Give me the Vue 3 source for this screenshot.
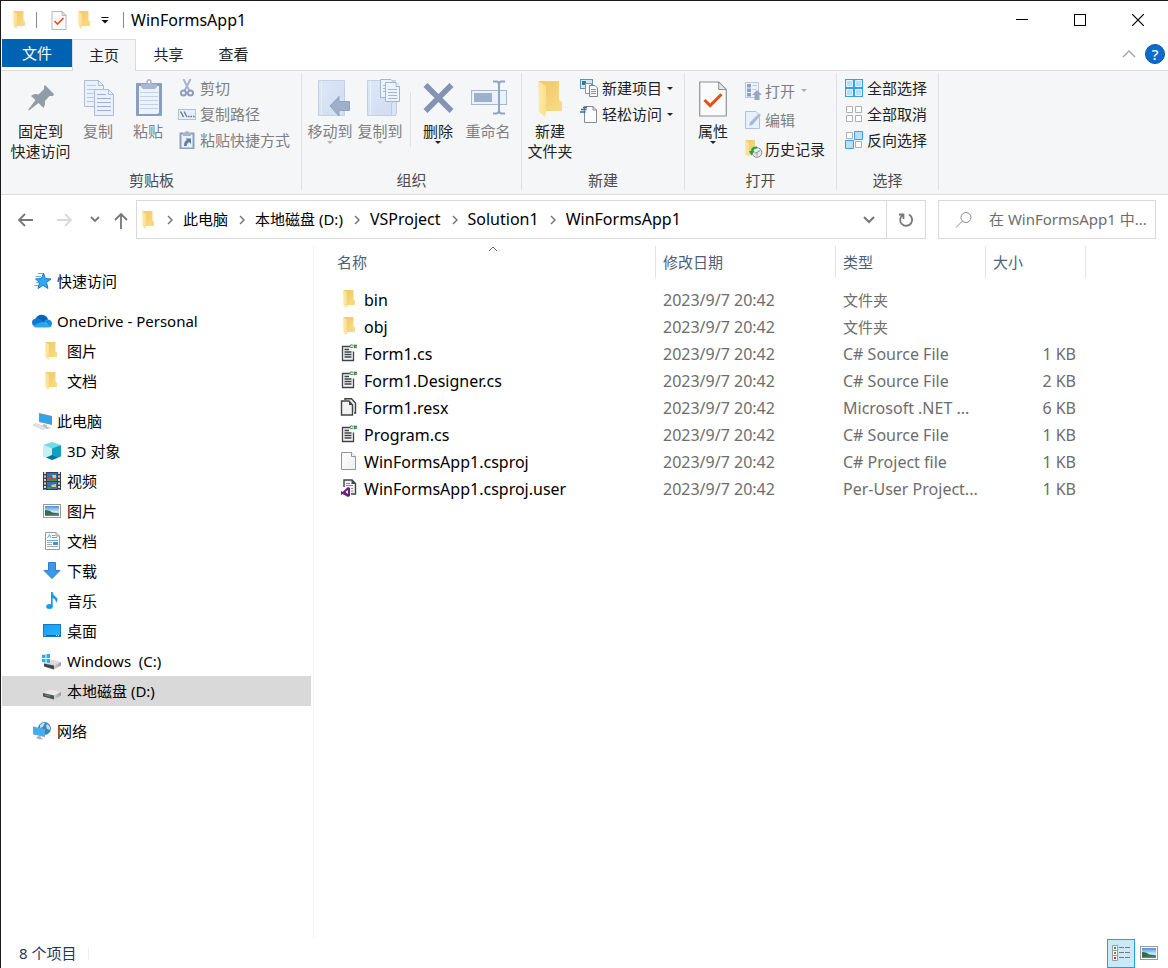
<script setup>
import { ref } from 'vue'

const tabs = ['主页', '共享', '查看']

const clipboardActions = [
  { icon: 'cut', label: '剪切' },
  { icon: 'copypath', label: '复制路径' },
  { icon: 'pastelink', label: '粘贴快捷方式' }
]
const newActions = [
  { icon: 'newitem', label: '新建项目' },
  { icon: 'ease', label: '轻松访问' }
]
const openActions = [
  { icon: 'open', label: '打开', arrow: true, disabled: true },
  { icon: 'edit', label: '编辑', disabled: true },
  { icon: 'history', label: '历史记录' }
]
const selectActions = [
  { icon: 'selall', label: '全部选择' },
  { icon: 'selnone', label: '全部取消' },
  { icon: 'selinv', label: '反向选择' }
]

const crumbs = [
  { label: '此电脑' },
  { label: '本地磁盘 (D:)' },
  { label: 'VSProject', latin: true },
  { label: 'Solution1', latin: true },
  { label: 'WinFormsApp1', latin: true }
]

const navGroups = [
  [{ icon: 'star', label: '快速访问' }],
  [
    { icon: 'cloud', label: 'OneDrive - Personal' },
    { icon: 'folder', label: '图片', child: true },
    { icon: 'folder', label: '文档', child: true }
  ],
  [
    { icon: 'pc', label: '此电脑' },
    { icon: 'cube', label: '3D 对象', child: true },
    { icon: 'video', label: '视频', child: true },
    { icon: 'picture', label: '图片', child: true },
    { icon: 'doc', label: '文档', child: true },
    { icon: 'download', label: '下载', child: true },
    { icon: 'music', label: '音乐', child: true },
    { icon: 'desktop', label: '桌面', child: true },
    { icon: 'windrive', label: 'Windows  (C:)', child: true },
    { icon: 'drive', label: '本地磁盘 (D:)', child: true, active: true }
  ],
  [{ icon: 'network', label: '网络' }]
]

const date = '2023/9/7 20:42'
const files = [
  { icon: 'folder', name: 'bin', type: '文件夹', size: '' },
  { icon: 'folder', name: 'obj', type: '文件夹', size: '' },
  { icon: 'cs', name: 'Form1.cs', type: 'C# Source File', size: '1 KB' },
  { icon: 'cs', name: 'Form1.Designer.cs', type: 'C# Source File', size: '2 KB' },
  { icon: 'resx', name: 'Form1.resx', type: 'Microsoft .NET ...', size: '6 KB' },
  { icon: 'cs', name: 'Program.cs', type: 'C# Source File', size: '1 KB' },
  { icon: 'blank', name: 'WinFormsApp1.csproj', type: 'C# Project file', size: '1 KB' },
  { icon: 'vs', name: 'WinFormsApp1.csproj.user', type: 'Per-User Project...', size: '1 KB' }
]

const query = ref('')
</script>

<template>
  <div class="window">
    <svg class="defs" width="0" height="0" aria-hidden="true">
      <defs>
        <linearGradient id="gBack" x1="0" x2="1" y1="0" y2="1">
          <stop offset="0" stop-color="#f0c765" /><stop offset="1" stop-color="#fadc87" />
        </linearGradient>
        <linearGradient id="gFlap" x1="0" x2="1"><stop offset="0" stop-color="#fdeaae" /><stop offset="1" stop-color="#fcdf8c" /></linearGradient>
        <linearGradient id="gPage" x1="0" x2="1" y1="0" y2="1"><stop offset="0" stop-color="#fff" /><stop offset="1" stop-color="#eceff2" /></linearGradient>
        <linearGradient id="gBook" x1="0" x2="1" y1="0" y2="1"><stop offset="0" stop-color="#dde8f6" /><stop offset="1" stop-color="#cfdcf0" /></linearGradient>
        <linearGradient id="gBlue" x1="0" x2="1" y1="0" y2="1"><stop offset="0" stop-color="#1e9bf5" /><stop offset="1" stop-color="#28b4ff" /></linearGradient>
        <linearGradient id="gDrive" x1="0" x2="1"><stop offset="0" stop-color="#d4d4d4" /><stop offset="1" stop-color="#989898" /></linearGradient>
        <linearGradient id="gSky" x1="0" x2="0" y1="0" y2="1"><stop offset="0" stop-color="#4a90dd" /><stop offset="0.6" stop-color="#d8ecf8" /><stop offset="1" stop-color="#3d7396" /></linearGradient>
      </defs>
      <symbol id="i-folder" viewBox="-4 0 32 36">
        <path d="M1 0H21V19L24 21V30H6Z" fill="url(#gBack)" />
        <path d="M0 0L8 5V31L7 36L1 31Z" fill="url(#gFlap)" />
      </symbol>
      <symbol id="i-check" viewBox="0 0 30 38">
        <path d="M1 1H21L29 9V37H1Z" fill="#fafbfc" stroke="#8a8d90" stroke-width="1.200" />
        <path d="M21 1V9H29Z" fill="#e4e6e8" stroke="#8a8d90" />
        <path d="M6 20L12 26L24 14" fill="none" stroke="#e8500f" stroke-width="3.200" />
      </symbol>
      <symbol id="i-pin" viewBox="0 0 40 40">
        <path d="M24 6L33 15L32 17L28.5 17L24 22Q24.500 26 22.500 29L17.500 24L8 31.500L7 31L14.500 21L10 17Q13 14 17.500 15.500L23 10V7.500Z" fill="#929ca6" />
      </symbol>
      <symbol id="i-copy" viewBox="0 0 40 40">
        <g fill="#e9f1fb" stroke="#abbbd8">
          <path d="M6.500 1.500H20.500L25.500 6.500V27.500H6.500Z" /><path d="M20.500 1.500V6.500H25.500Z" />
          <path d="M9 6.500H18M9 10.500H23M9 14.500H23M9 18.500H23M9 22.500H23" stroke="#bac8df" />
          <path d="M16.500 10.500H30.500L35.500 15.500V36.500H16.500Z" /><path d="M30.500 10.500V15.500H35.500Z" />
          <path d="M19 15.500H28M19 19.500H33M19 23.500H33M19 27.500H33M19 31.500H33" stroke="#9fb1d1" />
        </g>
      </symbol>
      <symbol id="i-paste" viewBox="0 0 40 40">
        <rect x="8" y="4" width="26" height="33" rx="1" fill="#8c9ebd" />
        <path d="M11 7H31V34L29 35H11Z" fill="#eaf2fc" />
        <path d="M12 13.500H30M12 17.500H30M12 21.500H30M12 25.500H30M12 29.500H30" stroke="#c5d2e6" />
        <path d="M13 5H18Q18 0 21 0T24 5H29V8L27 10H15L13 8Z" fill="#a9b8d1" />
        <rect x="20" y="2" width="2" height="2" fill="#fff" />
      </symbol>
      <symbol id="i-moveto" viewBox="0 0 40 40">
        <path d="M8.500 1.500H34.500V36.500H8.500Z" fill="url(#gBook)" stroke="#c3d1e8" />
        <path d="M11.500 2V36M31 20V36" stroke="#e4edf8" />
        <path d="M20 27L29 17.500V22.500H39.500V31.500H29V37Z" fill="#9eafcb" stroke="#90a2c1" />
      </symbol>
      <symbol id="i-copyto" viewBox="0 0 40 40">
        <path d="M7.500 1.500H35.500V36.500H7.500Z" fill="url(#gBook)" stroke="#c3d1e8" />
        <path d="M10.500 2V36" stroke="#e9f0fa" /><path d="M31.500 36.500V24L36.500 21V34L35.500 36.500Z" fill="#d9e5f4" stroke="#bdcce5" />
        <g fill="#edf3fc" stroke="#a2b4d2"><path d="M20.500 .5H31L34.500 4V18.500H20.500Z" /><path d="M23 6.500H30M23 9.500H30M23 12.500H30" />
          <path d="M25.500 3.500H36L39.500 7.500V22.500H25.500Z" /><path d="M36 3.500V7.500H39.500M28 10.500H37M28 13.500H37M28 16.500H37M28 19.500H37" /></g>
      </symbol>
      <symbol id="i-delete" viewBox="0 0 40 40">
        <path d="M7.500 6L33.500 32M33.500 6L7.500 32" stroke="#8493b3" stroke-width="5.600" />
      </symbol>
      <symbol id="i-rename" viewBox="0 0 40 40">
        <rect x="3.500" y="11.500" width="35" height="14" fill="#e9f1fb" stroke="#a7b8d4" />
        <rect x="6" y="14" width="18" height="9" fill="#9fb0cc" />
        <path d="M25 2.500H29Q31 3 31 6V31Q31 34.500 28 34.500H25M37 2.500H33Q31 3 31 6M31 31Q31 34.500 34 34.500H37" fill="none" stroke="#91a4c3" stroke-width="2" />
      </symbol>
      <symbol id="i-cut" viewBox="0 0 18 18">
        <path d="M5.500 0L11.500 12M12.500 0L6.500 12" stroke="#a5b4cf" stroke-width="2" />
        <circle cx="5.500" cy="14" r="2.500" fill="none" stroke="#8b9dbe" stroke-width="2" /><circle cx="12.500" cy="14" r="2.500" fill="none" stroke="#8b9dbe" stroke-width="2" />
      </symbol>
      <symbol id="i-copypath" viewBox="0 0 18 18">
        <rect x=".5" y="4.500" width="17" height="10" fill="#e6eefa" stroke="#b3c2dc" />
        <path d="M2.500 6.500L5.500 12M6 6.500L9 12M10 11.500H11.500M12.500 11.500H14M15 11.500H16.500" stroke="#61738f" stroke-width="1.300" />
      </symbol>
      <symbol id="i-pastelink" viewBox="0 0 18 18">
        <rect x="2.500" y="2.500" width="13" height="15" fill="#e9f1fb" stroke="#8ea0bf" stroke-width="2" />
        <path d="M5 2H7Q7 0 9 0T11 2H13V5H5Z" fill="#a6b5cf" />
        <path d="M6 15Q6 10 9 9L7.500 7.500H13V13L11 11Q9 12 8.500 15Z" fill="#677b9f" />
      </symbol>
      <symbol id="i-newitem" viewBox="0 0 18 18">
        <rect x=".5" y=".5" width="12" height="9" fill="#cfeafa" stroke="#5a93b5" /><rect x="2" y="2" width="4" height="4" fill="#33759c" />
        <path d="M5.500 4.500H11.500V14.500H5.500Z" fill="#fff" stroke="#8b959c" />
        <path d="M9.500 6.500H15L17.500 9V17.500H9.500Z" fill="#f6faff" stroke="#7d858b" /><path d="M11 10.500H16M11 12.500H16M11 14.500H16" stroke="#4fa3e0" />
      </symbol>
      <symbol id="i-ease" viewBox="0 0 18 18">
        <path d="M4.500 1.500H13L16.500 5V17.500H4.500Z" fill="#fbfcfd" stroke="#868b90" /><path d="M13 1.500V5H16.500" fill="none" stroke="#868b90" />
        <path d="M0 7H5.500M1 4.500H6.500M3 2.500H7" stroke="#1b76bf" stroke-width="1.500" />
      </symbol>
      <symbol id="i-open" viewBox="0 0 18 18">
        <rect x=".5" y=".5" width="13" height="15" fill="#edf3fb" stroke="#b9c7df" />
        <path d="M2 2H6V5.500H2ZM2 6.500H6V10H2ZM2 11H6V14.500H2Z" fill="#8d9fbe" /><path d="M7.500 3.500H12M7.500 7.500H11" stroke="#b7c4db" />
        <path d="M12 8L17 13H14.500V18H9.500V13H7Z" fill="#96a7c5" />
      </symbol>
      <symbol id="i-edit" viewBox="0 0 18 18">
        <path d="M.5 .5H11L14.500 4V17.500H.5Z" fill="#e8f0fb" stroke="#b2c1db" />
        <path d="M4 15L5 11L14 2.500L16 4L7.500 14Z" fill="#a7b7d3" stroke="#dce6f5" stroke-width=".6" />
      </symbol>
      <symbol id="i-history" viewBox="0 0 18 18">
        <path d="M1 0H10V15H3Z" fill="url(#gBack)" /><path d="M0 0L4 3V17L0 15Z" fill="url(#gFlap)" />
        <circle cx="12" cy="12.500" r="4.800" fill="#e9ebec" stroke="#868b8e" /><path d="M12 12.500L15 10.500M9.500 13L12 12.500V15.500" fill="none" stroke="#8b9195" />
        <path d="M12 6.500Q6 6 6 11H4L6.500 15.500L9.500 11H8.500Q8.500 8.500 12 8.500Z" fill="#25a73b" />
      </symbol>
      <symbol id="i-selall" viewBox="0 0 18 18">
        <rect width="18" height="18" fill="#3d9de7" /><path d="M1.500 1.500H7.500V7.500H1.500ZM10.500 1.500H16.500V7.500H10.500ZM1.500 10.500H7.500V16.500H1.500ZM10.500 10.500H16.500V16.500H10.500Z" fill="#b8e0fb" stroke="#e4f4ff" />
      </symbol>
      <symbol id="i-selnone" viewBox="0 0 18 18">
        <path d="M1.500 1.500H7.500V7.500H1.500ZM10.500 1.500H16.500V7.500H10.500ZM1.500 10.500H7.500V16.500H1.500ZM10.500 10.500H16.500V16.500H10.500Z" fill="#fff" stroke="#afafaf" />
      </symbol>
      <symbol id="i-selinv" viewBox="0 0 18 18">
        <path d="M1.500 1.500H7.500V7.500H1.500ZM10.500 10.500H16.500V16.500H10.500Z" fill="#fff" stroke="#afafaf" />
        <path d="M9.500 .5H17.500V8.500H9.500ZM.5 9.500H8.500V17.500H.5Z" fill="#b8e0fb" stroke="#3d9de7" />
      </symbol>

      <symbol id="i-star" viewBox="0 0 20 20">
        <path d="M11.500 2L13.300 7.500L19 8L14.500 11.500L16 17.500L11 14.300L6 17.500L7.500 11.500L3.500 8L9.500 7.500Z" fill="#31a6f1" stroke="#177cc8" />
        <path d="M6 2.500H11M3.500 5.500H9M4 11.500H7M2.500 14.500H6" stroke="#5db3e9" />
      </symbol>
      <symbol id="i-cloud" viewBox="0 0 20 20">
        <path d="M3.500 8Q6 3 11 4Q15 4.500 16 8.500L7 15Z" fill="#0364b8" /><path d="M12 10Q13 8 16 8.500Q20 9 20 12.500Q20 15 18 16.200Z" fill="#1490df" />
        <path d="M4 7.500Q7 7 9 9L14 12L7 14L2 15Q0 14 0 11.500Q0 8 4 7.500Z" fill="#0f78d4" /><path d="M1.500 15Q7 11 11.500 11L19 15.500Q18 16.500 16 16.500H4.500Q2.500 16.500 1.500 15Z" fill="#28a8ea" />
      </symbol>
      <symbol id="i-pc" viewBox="0 0 20 20">
        <path d="M7 2L20 5V14L7 11Z" fill="#6d92aa" /><path d="M8 3.500L19 6V12.500L8 10Z" fill="#2da5ef" />
        <path d="M12 13L15 14V16L19 17L15 18L9 16Z" fill="#b9c1c6" /><path d="M1 14L4 12.500L14 16.500L11 18.500Z" fill="#e1e5e8" stroke="#bfc6ca" stroke-width=".6" />
      </symbol>
      <symbol id="i-cube" viewBox="0 0 20 20">
        <path d="M10 1L19 4L10 8L1 4Z" fill="#74dbe5" /><path d="M1 4L10 7.500V19L1 15.500Z" fill="#c6eef3" /><path d="M19 4L10 7.500V19L19 15.500Z" fill="#139fc4" /><path d="M4 16.500L10 14L16 16.500L10 19Z" fill="#087491" />
      </symbol>
      <symbol id="i-video" viewBox="0 0 20 20">
        <rect x="1" y="1" width="18" height="18" fill="#3b3f43" /><path d="M5 2H15V10H5ZM5 11H15V18H5Z" fill="#386ec0" />
        <path d="M10 4H14V7H11ZM9 14L14 13V16H10Z" fill="#ead13f" /><path d="M5 7H9V9H5ZM11 7H14V10H11Z" fill="#d7462d" /><path d="M5 9H15V10H5ZM6 16H9V18H6Z" fill="#479447" />
        <path d="M3 1V19M17 1V19" stroke="#fff" stroke-width="1.600" stroke-dasharray="2 1.500" />
      </symbol>
      <symbol id="i-picture" viewBox="0 0 20 20">
        <rect x="1.500" y="3.500" width="17" height="13" fill="#fff" stroke="#969a9d" /><path d="M3 5H17V15H3Z" fill="url(#gSky)" />
        <path d="M3 9Q8 9 10 11.500Q14 12 17 12.500V13.500L3 14Z" fill="#39694b" />
      </symbol>
      <symbol id="i-doc" viewBox="0 0 20 20">
        <path d="M3.500 1.500H14L17.500 5V18.500H3.500Z" fill="#fff" stroke="#979a9d" /><path d="M14 1.500V5H17.500" fill="none" stroke="#979a9d" />
        <path d="M5.500 7L7.500 3.500L9 7M10 4.500H13M10 6.500H15M5 9.500H16" fill="none" stroke="#5ba7d6" /><path d="M5 11.500H10M5 13.500H10M5 15.500H16" stroke="#a4a7aa" /><rect x="11" y="11" width="5" height="3" fill="#4a8fbd" />
      </symbol>
      <symbol id="i-download" viewBox="0 0 20 20"><path d="M6.500 1.500H13.500V9.500H18L10 17.500L2 9.500H6.500Z" fill="#3a9ae8" stroke="#2b7fcb" /></symbol>
      <symbol id="i-music" viewBox="0 0 20 20">
        <path d="M9 1H10.500Q11 4 14 6T14 12Q14 8 10.700 7V15H9Z" fill="#139cf3" /><ellipse cx="7.500" cy="15.500" rx="3.300" ry="2.500" fill="#139cf3" />
      </symbol>
      <symbol id="i-desktop" viewBox="0 0 20 20">
        <rect x="1.500" y="3.500" width="17" height="12" fill="url(#gBlue)" stroke="#1479c7" /><path d="M2 14.500H18" stroke="#0a5b9f" /><path d="M2.500 14.500H4M14 14.500H17.500" stroke="#fff" stroke-dasharray="1 1" />
      </symbol>
      <symbol id="i-drive" viewBox="0 0 20 20">
        <path d="M1 12L9 8.500L19 11L12 14.500Z" fill="#eaeaea" /><path d="M12 14.500L19 11V14.500L12 18.500Z" fill="url(#gDrive)" /><path d="M1 12L12 14.500V18.500L1 15.500Z" fill="#505252" /><path d="M3 14L8 15.200" stroke="#719969" />
      </symbol>
      <symbol id="i-windrive" viewBox="0 0 20 20">
        <path d="M1 13L9 8.500L19 11L12 14.500Z" fill="#dcdcdc" /><path d="M12 14.500L19 11V14.500L12 18.500Z" fill="url(#gDrive)" /><path d="M2 12.500L12 14.500V18.500L2 15.500Z" fill="#454747" />
        <path d="M0 4L3.500 3.500V7H0ZM4.500 3.300L8 2.800V7H4.500ZM0 8H3.500V11.500L0 11ZM4.500 8H8V12L4.500 11.600Z" fill="#16b3ee" />
      </symbol>
      <symbol id="i-network" viewBox="0 0 20 20">
        <circle cx="12.500" cy="7.500" r="6.500" fill="#3686b8" /><path d="M8 4Q11 1 13 2L11 6L8 7ZM15 3Q19 5 18 9L15 8L14 5Z" fill="#b9def0" />
        <path d="M1 5.500L13 8V16L1 13.500Z" fill="#6aa3c8" /><path d="M2 6.800L12 9V14.700L2 12.500Z" fill="#3bb0f8" /><path d="M6 15L9 15.500V17L12 18L8 18.500L4 17Z" fill="#a9b2b8" />
      </symbol>

      <symbol id="i-cs" viewBox="0 0 18 18">
        <path d="M10 2.500H2.500V16.500H13.500V7.500" fill="#f3f4f5" stroke="#414447" stroke-width="1.300" /><path d="M4.500 5.500H9M4.500 8H11.500M4.500 10.500H11.500M4.500 13H11.500" stroke="#414447" stroke-width="1.300" />
        <path d="M13 1.200Q10 0 10 2.200Q10 4.500 13 3.200M13.500 1.500H17M13.500 3.200H17M14.500 .5V4.200M16 .5V4.200" fill="none" stroke="#368a3b" stroke-width="1" />
      </symbol>
      <symbol id="i-resx" viewBox="0 0 18 18">
        <path d="M5 2V.8H11.500L15.500 5V15H14" fill="#eee" stroke="#414447" stroke-width="1.400" /><path d="M1.500 3H9L12.500 7V17H1.500Z" fill="#f2f2f2" stroke="#414447" stroke-width="1.400" /><path d="M9 3V7H13Z" fill="#414447" />
      </symbol>
      <symbol id="i-blank" viewBox="0 0 18 18"><path d="M1.500 .5H11.500L15.500 4.500V17.500H1.500Z" fill="url(#gPage)" stroke="#929598" /><path d="M11.500 .5V4.500H15.500" fill="#fff" stroke="#929598" /></symbol>
      <symbol id="i-vs" viewBox="0 0 18 18">
        <path d="M4 8V1H12L15.500 4.500V15H11" fill="#f1f1f1" stroke="#414447" stroke-width="1.400" /><path d="M11.500 1V5H15.500Z" fill="#414447" /><path d="M6 4.500H10M6 6.500H13M11 9.500H13M11 12H13" stroke="#8a8d90" />
        <path d="M8 8L2.500 13L1 11.700V16.300L2.500 15L8 18L10 17V9Z" fill="#68217a" /><path d="M8 11V15L5.500 13Z" fill="#fff" />
      </symbol>
      <symbol id="i-details" viewBox="0 0 20 20">
        <path d="M1.500 2.500H6.500V7.500H1.500ZM1.500 7.500H6.500V12.500H1.500ZM1.500 12.500H6.500V17.500H1.500Z" fill="#fff" stroke="#999" />
        <path d="M3 4H5V6H3Z" fill="#3977a8" /><path d="M3 9H5V11H3Z" fill="#74932f" /><path d="M3 14H5V16H3Z" fill="#c62b20" />
        <path d="M8 4.500H13M14 4.500H19M8 9.500H13M14 9.500H19M8 14.500H13M14 14.500H19" stroke="#777" />
      </symbol>
    </svg>

    <header class="titlebar">
      <svg width="16" height="18"><use href="#i-folder" /></svg>
      <span class="t-sep"></span>
      <button class="t-btn" aria-label="属性"><svg width="16" height="19"><use href="#i-check" /></svg></button>
      <button class="t-btn" aria-label="新建文件夹"><svg width="16" height="18"><use href="#i-folder" /></svg></button>
      <button class="t-more" aria-label="自定义快速访问工具栏"><svg width="8" height="8" viewBox="0 0 8 8"><path d="M.5 1.500H7.500" stroke="#111" /><path d="M.5 4H7.500L4 7.500Z" fill="#111" /></svg></button>
      <span class="t-sep"></span>
      <h1>WinFormsApp1</h1>
      <div class="controls">
        <button aria-label="最小化"><svg width="12" height="12"><path d="M0 5.500H12" stroke="#000" /></svg></button>
        <button aria-label="最大化"><svg width="12" height="12"><rect x=".5" y=".5" width="11" height="11" fill="none" stroke="#000" /></svg></button>
        <button aria-label="关闭"><svg width="12" height="12"><path d="M0 0L12 12M12 0L0 12" stroke="#000" stroke-width="1.200" /></svg></button>
      </div>
    </header>

    <nav class="tabs">
      <button class="file-tab">文件</button>
      <button v-for="(t, i) in tabs" :key="t" class="tab" :class="{ current: i === 0 }">{{ t }}</button>
      <button class="collapse" aria-label="折叠功能区"><svg width="14" height="8" viewBox="0 0 14 8"><path d="M1 7L7 1L13 7" fill="none" stroke="#a3a3a3" stroke-width="1.400" /></svg></button>
      <button class="help" aria-label="帮助">?</button>
    </nav>

    <section class="ribbon">
      <div class="group g-clip">
        <div class="group-body">
          <button class="big pin"><svg width="40" height="40"><use href="#i-pin" /></svg><span>固定到<br />快速访问</span></button>
          <button class="big off"><svg width="40" height="40"><use href="#i-copy" /></svg><span>复制</span></button>
          <button class="big off"><svg width="40" height="40"><use href="#i-paste" /></svg><span>粘贴</span></button>
          <div class="smalls">
            <button v-for="a in clipboardActions" :key="a.label" class="small off"><svg width="18" height="18"><use :href="'#i-' + a.icon" /></svg>{{ a.label }}</button>
          </div>
        </div>
        <h2>剪贴板</h2>
      </div>
      <div class="group g-org">
        <div class="group-body">
          <button class="big off"><svg width="40" height="40"><use href="#i-moveto" /></svg><span>移动到</span><i class="arrow"></i></button>
          <button class="big off"><svg width="40" height="40"><use href="#i-copyto" /></svg><span>复制到</span><i class="arrow"></i></button>
          <span class="divider"></span>
          <button class="big"><svg width="40" height="40"><use href="#i-delete" /></svg><span>删除</span><i class="arrow"></i></button>
          <button class="big off"><svg width="40" height="40"><use href="#i-rename" /></svg><span>重命名</span></button>
        </div>
        <h2>组织</h2>
      </div>
      <div class="group g-new">
        <div class="group-body">
          <button class="big"><svg class="inset" width="32" height="40"><use href="#i-folder" /></svg><span>新建<br />文件夹</span></button>
          <div class="smalls">
            <button v-for="a in newActions" :key="a.label" class="small"><svg width="18" height="18"><use :href="'#i-' + a.icon" /></svg>{{ a.label }}<i class="arrow"></i></button>
          </div>
        </div>
        <h2>新建</h2>
      </div>
      <div class="group g-open">
        <div class="group-body">
          <button class="big"><svg class="inset" width="40" height="40"><use href="#i-check" /></svg><span>属性</span><i class="arrow"></i></button>
          <div class="smalls">
            <button v-for="a in openActions" :key="a.label" class="small" :class="{ off: a.disabled }"><svg width="18" height="18"><use :href="'#i-' + a.icon" /></svg>{{ a.label }}<i v-if="a.arrow" class="arrow"></i></button>
          </div>
        </div>
        <h2>打开</h2>
      </div>
      <div class="group g-select">
        <div class="group-body">
          <div class="smalls">
            <button v-for="a in selectActions" :key="a.label" class="small"><svg width="18" height="18"><use :href="'#i-' + a.icon" /></svg>{{ a.label }}</button>
          </div>
        </div>
        <h2>选择</h2>
      </div>
    </section>

    <div class="location">
      <div class="history">
        <button aria-label="后退"><svg width="16" height="14" viewBox="0 0 16 14"><path d="M7 1L1 7L7 13M1 7H15" fill="none" stroke="#777" stroke-width="1.800" /></svg></button>
        <button aria-label="前进"><svg width="16" height="14" viewBox="0 0 16 14"><path d="M9 1L15 7L9 13M1 7H15" fill="none" stroke="#d9d9d9" stroke-width="1.800" /></svg></button>
        <button class="recent" aria-label="最近浏览的位置"><svg width="10" height="7" viewBox="0 0 10 7"><path d="M1 1L5 5L9 1" fill="none" stroke="#777" stroke-width="1.800" /></svg></button>
        <button class="up" aria-label="向上"><svg width="14" height="16" viewBox="0 0 14 16"><path d="M1 7L7 1L13 7M7 1V16" fill="none" stroke="#777" stroke-width="1.800" /></svg></button>
      </div>
      <div class="address">
        <svg width="16" height="18"><use href="#i-folder" /></svg>
        <template v-for="c in crumbs" :key="c.label">
          <svg class="chev" width="6" height="10" viewBox="0 0 6 10"><path d="M1 1L5 5L1 9" fill="none" stroke="#777" stroke-width="1.500" /></svg>
          <a href="#" class="crumb" :class="{ latin: c.latin }">{{ c.label }}</a>
        </template>
        <button class="drop" aria-label="以前的位置"><svg width="12" height="8" viewBox="0 0 12 8"><path d="M1 1L6 6L11 1" fill="none" stroke="#777" stroke-width="2" /></svg></button>
        <button class="refresh" aria-label="刷新"><svg width="16" height="16" viewBox="0 0 16 16"><path d="M11 2.500A6 6 0 1 1 4.500 3M1 2.500H5.500V7" fill="none" stroke="#777" stroke-width="1.800" /></svg></button>
      </div>
      <label class="search">
        <svg width="18" height="18" viewBox="0 0 18 18"><circle cx="11" cy="6.500" r="5" fill="none" stroke="#888" /><path d="M7.500 10L1 16.500" stroke="#888" /></svg>
        <input v-model="query" type="text" aria-label="搜索" placeholder="在 WinFormsApp1 中..." />
      </label>
    </div>

    <main class="content">
      <nav class="tree">
        <ul v-for="(g, i) in navGroups" :key="i">
          <li v-for="n in g" :key="n.label">
            <a href="#" :class="{ child: n.child, active: n.active }"><svg width="20" height="20" :class="{ 'tree-folder': n.icon === 'folder' }"><use :href="'#i-' + n.icon" /></svg><span>{{ n.label }}</span></a>
          </li>
        </ul>
      </nav>
      <section class="list">
        <table>
          <colgroup><col class="c-name" /><col class="c-date" /><col class="c-type" /><col class="c-size" /></colgroup>
          <thead>
            <tr>
              <th><button>名称<svg class="sort" width="10" height="6" viewBox="0 0 10 6"><path d="M1 5L5 1L9 5" fill="none" stroke="#666" /></svg></button></th>
              <th><button>修改日期</button></th>
              <th><button>类型</button></th>
              <th><button>大小</button></th>
            </tr>
          </thead>
          <tbody>
            <tr v-for="f in files" :key="f.name">
              <td class="name"><div><svg width="18" height="18"><use :href="'#i-' + f.icon" /></svg>{{ f.name }}</div></td>
              <td>{{ date }}</td>
              <td :class="{ cjk: f.icon === 'folder' }">{{ f.type }}</td>
              <td class="size">{{ f.size }}</td>
            </tr>
          </tbody>
        </table>
      </section>
    </main>

    <footer class="status">
      <span class="count">8 个项目</span>
      <span class="status-sep"></span>
      <button class="view on" aria-label="详细信息"><svg width="20" height="20"><use href="#i-details" /></svg></button>
      <button class="view" aria-label="大图标"><svg width="20" height="20"><use href="#i-picture" /></svg></button>
    </footer>
  </div>
</template>

<style>
body { background: #fff; }
</style>

<style scoped>
* { box-sizing: border-box; }
.window {
  display: flex;
  flex-direction: column;
  min-height: 100vh;
  border-top: 1px solid #1c1a1d;
  border-left: 1px solid #1c1a1d;
  background: #fff;
  color: #000;
  font: 15px/20px "Noto Sans", "Noto Sans CJK SC", sans-serif;
}
.defs { position: absolute; }
svg { flex: none; }
button { font: inherit; color: inherit; background: none; border: 0; padding: 0; margin: 0; }
a { color: inherit; text-decoration: none; }
h1, h2, ul { margin: 0; padding: 0; font: inherit; list-style: none; }

.titlebar { display: flex; align-items: center; height: 38px; padding-left: 10px; }
.t-sep { width: 1px; height: 16px; background: #888; margin: 0 7px 0 9px; }
.t-btn { display: flex; justify-content: center; width: 25px; margin-left: 2px; }
.t-btn + .t-btn { margin-left: 0; }
.t-more { display: flex; justify-content: center; width: 18px; }
.titlebar h1 { font-size: 16px; }
.controls { display: flex; align-self: stretch; margin-left: auto; padding-right: 1px; }
.controls button { width: 58px; display: flex; align-items: center; justify-content: center; }

.tabs { display: flex; height: 32px; padding-left: 1px; border-bottom: 1px solid #dadbdc; }
.file-tab { width: 70px; height: 28px; background: #0063b1; color: #fff; }
.tab { width: 65px; height: 30px; color: #222; }
.tab.current { width: 64px; height: 32px; padding-bottom: 2px; background: #f5f6f7; border: 1px solid #dadbdc; border-bottom: 0; }
.collapse { margin-left: auto; display: flex; align-items: center; padding: 0 9px 2px; }
.help { width: 20px; height: 20px; margin: 5px 3px 0 0; border: 1px solid #0a56a5; border-radius: 50%; background: #0a6cce; color: #fff; line-height: 18px; font-weight: 500; }

.ribbon { display: flex; height: 124px; padding-left: 1px; background: #f5f6f7; border-bottom: 1px solid #dadbdc; color: #222; }
.group { display: flex; flex-direction: column; margin: 2px 0 4px; border-right: 1px solid #dfe1e3; }
.group h2 { text-align: center; color: #4b4b4b; line-height: 20px; }
.group-body { display: flex; height: 98px; }
.g-clip { width: 300px; }
.g-org { width: 220px; }
.g-new { width: 163px; }
.g-open { width: 152px; }
.g-select { width: 102px; }
.g-org .group-body, .g-new .group-body, .g-open .group-body { padding-left: 3px; }
.g-select .group-body { padding-left: 8px; }
.big { display: flex; flex-direction: column; align-items: center; width: 50px; padding-top: 6px; line-height: 20px; white-space: nowrap; }
.big > svg { margin-bottom: 2px; height: 40px; }
.big.pin { width: 71px; padding-left: 6px; }
.big span { display: block; text-align: center; }
.inset { padding: 2px 0; }
.off { color: #7d7f82; }
.arrow { width: 0; height: 0; border: 3px solid transparent; border-top-color: #222; border-bottom: 0; }
.off .arrow { border-top-color: #b0b0b0; }
.divider { width: 1px; height: 55px; background: #dfe1e3; margin: 19px 2px 0 5px; }
.smalls { display: flex; flex-direction: column; padding: 2px 0 0 5px; }
.small { display: flex; align-items: center; height: 26px; gap: 4px; white-space: nowrap; }
.small .arrow { margin-left: 1px; }
.g-open .smalls { padding: 3px 0 0 7px; }
.g-open .small { height: 29px; gap: 2px; }
.g-open .small .arrow { margin-left: 4px; }
.g-select .smalls { padding-left: 0; }

.location { display: flex; padding: 5px 12px 5px 0; }
.history { display: flex; align-items: center; width: 135px; padding-left: 17px; gap: 22px; }
.history button { display: flex; }
.history .recent { margin-left: -4px; }
.history .up { margin-left: -8px; padding-top: 2px; }
.address { display: flex; align-items: center; flex: 1; height: 39px; padding-left: 3px; border: 1px solid #d9d9d9; }
.crumb { padding-bottom: 2px; white-space: nowrap; }
.latin { font-size: 16px; }
.chev { margin: 0 10px 0 11px; }
.drop { display: flex; align-items: center; justify-content: center; width: 36px; margin-left: auto; align-self: stretch; border-right: 1px solid #d9d9d9; }
.refresh { display: flex; align-items: center; justify-content: center; width: 38px; align-self: stretch; }
.search { display: flex; align-items: center; width: 218px; height: 39px; margin-left: 12px; padding-left: 16px; border: 1px solid #d9d9d9; }
.search input { flex: 1; min-width: 0; margin-left: 16px; padding: 0 0 2px; border: 0; outline: 0; background: none; font: inherit; color: #6d6d6d; }
.search input::placeholder { color: #6d6d6d; opacity: 1; }

.content { display: flex; flex: 1; }
.tree { width: 313px; margin-top: 2px; padding: 20px 2px 0 1px; border-right: 1px solid #f2f2f2; }
.tree ul { margin-bottom: 10px; }
.tree a { display: flex; align-items: center; height: 30px; padding-left: 30px; gap: 5px; white-space: pre; }
.tree a.child { padding-left: 40px; }
.tree a.active { background: #d9d9d9; }
.tree-folder { padding: 1px 3px 1px 1px; }

.list { flex: 1; padding: 2px 0 0 16px; }
table { width: 756px; table-layout: fixed; border-collapse: collapse; }
.c-name { width: 326px; }
.c-date { width: 180px; }
.c-type { width: 150px; }
.c-size { width: 100px; }
th { padding: 0 0 8px; font-weight: 400; }
th button { position: relative; display: block; width: 100%; height: 32px; padding-left: 7px; border-right: 1px solid #e3e3e3; color: #4c607a; text-align: left; }
.sort { position: absolute; left: 158px; top: 0; }
td { height: 27px; padding: 0 0 0 7px; color: #6d6d6d; font-size: 16px; white-space: nowrap; overflow: hidden; }
td.cjk { font-size: 15px; }
td.name { color: #000; padding-left: 10px; }
td.name div { display: flex; align-items: center; gap: 6px; }
td.name svg { margin-bottom: 2px; }
td.size { text-align: right; padding-right: 10px; }

.status { display: flex; align-items: center; height: 30px; padding-left: 18px; color: #1e395b; }
.status-sep { width: 1px; height: 13px; margin: 0 auto 0 12px; background: #eee; }
.view { display: flex; align-items: center; justify-content: center; width: 28px; height: 29px; border: 1px solid transparent; }
.view.on { background: #cbe8f6; border-color: #26a0da; }
.view:last-child { margin-right: 5px; }
</style>
